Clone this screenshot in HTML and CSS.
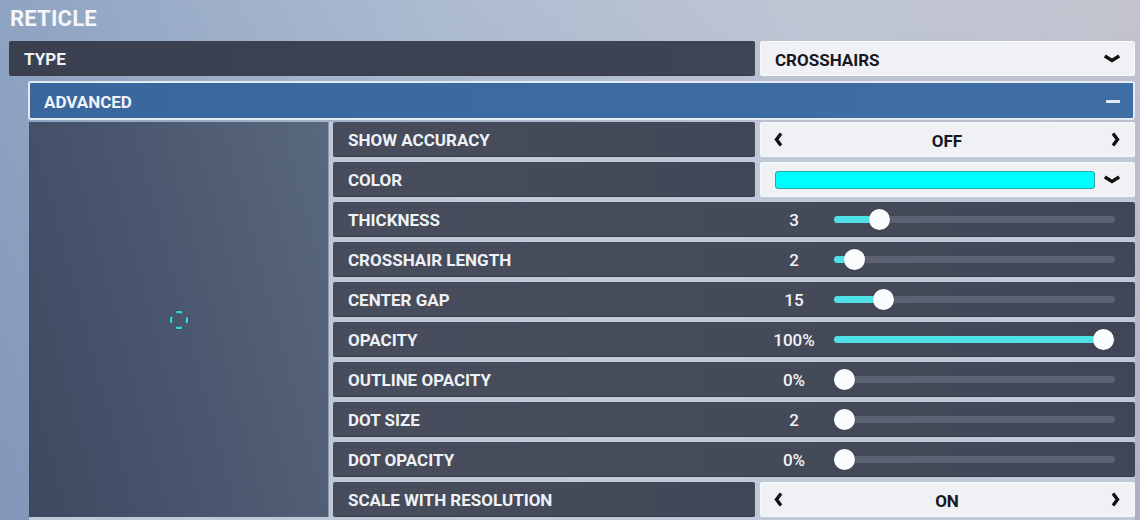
FILE: index.html
```html
<!DOCTYPE html>
<html>
<head>
<meta charset="utf-8">
<link rel="stylesheet" href="styles.css">
</head>
<body>
<div class="page">
  <h1 class="title">RETICLE</h1>
  <div class="type-row">
    <div class="cell label type-label">TYPE</div>
    <div class="light select">
      <span>CROSSHAIRS</span>
      <svg class="chev" width="18" height="9" viewBox="0 0 18 9"><polyline points="1.8,2 9,6.5 16.2,2" fill="none" stroke="#111" stroke-width="3.4" stroke-linejoin="miter"/></svg>
    </div>
  </div>
  <div class="advanced">
    <span>ADVANCED</span>
    <span class="minus"></span>
  </div>
  <div class="content">
    <div class="preview">
      <svg width="30" height="30" viewBox="0 0 30 30" class="reticle">
        <circle cx="15" cy="15" r="8" fill="none" stroke="rgba(20,40,60,0.5)" stroke-width="4" stroke-dasharray="6 6.566" stroke-dashoffset="3"/>
        <circle cx="15" cy="15" r="8" fill="none" stroke="#3fd8de" stroke-width="2.4" stroke-dasharray="6 6.566" stroke-dashoffset="3"/>
      </svg>
    </div>
    <div class="rows">
      <div class="pair-row">
        <div class="cell label">SHOW ACCURACY</div>
        <div class="light toggle">
          <svg width="9" height="15" viewBox="0 0 9 15"><polyline points="7,1.5 2.5,7.5 7,13.5" fill="none" stroke="#111" stroke-width="3.4"/></svg>
          <span>OFF</span>
          <svg width="9" height="15" viewBox="0 0 9 15"><polyline points="2,1.5 6.5,7.5 2,13.5" fill="none" stroke="#111" stroke-width="3.4"/></svg>
        </div>
      </div>
      <div class="pair-row">
        <div class="cell label">COLOR</div>
        <div class="light color-select">
          <span class="swatch"></span>
          <svg class="chev" width="18" height="9" viewBox="0 0 18 9"><polyline points="1.8,2 9,6.5 16.2,2" fill="none" stroke="#111" stroke-width="3.4"/></svg>
        </div>
      </div>
      <div class="cell slider-row">
        <span class="label">THICKNESS</span>
        <span class="value">3</span>
        <div class="track" style="--p:0.135"><div class="fill"></div><div class="thumb"></div></div>
      </div>
      <div class="cell slider-row">
        <span class="label">CROSSHAIR LENGTH</span>
        <span class="value">2</span>
        <div class="track" style="--p:0.039"><div class="fill"></div><div class="thumb"></div></div>
      </div>
      <div class="cell slider-row">
        <span class="label">CENTER GAP</span>
        <span class="value">15</span>
        <div class="track" style="--p:0.15"><div class="fill"></div><div class="thumb"></div></div>
      </div>
      <div class="cell slider-row">
        <span class="label">OPACITY</span>
        <span class="value">100%</span>
        <div class="track" style="--p:1"><div class="fill"></div><div class="thumb"></div></div>
      </div>
      <div class="cell slider-row">
        <span class="label">OUTLINE OPACITY</span>
        <span class="value">0%</span>
        <div class="track" style="--p:0"><div class="fill"></div><div class="thumb"></div></div>
      </div>
      <div class="cell slider-row">
        <span class="label">DOT SIZE</span>
        <span class="value">2</span>
        <div class="track" style="--p:0"><div class="fill"></div><div class="thumb"></div></div>
      </div>
      <div class="cell slider-row">
        <span class="label">DOT OPACITY</span>
        <span class="value">0%</span>
        <div class="track" style="--p:0"><div class="fill"></div><div class="thumb"></div></div>
      </div>
      <div class="pair-row">
        <div class="cell label">SCALE WITH RESOLUTION</div>
        <div class="light toggle">
          <svg width="9" height="15" viewBox="0 0 9 15"><polyline points="7,1.5 2.5,7.5 7,13.5" fill="none" stroke="#111" stroke-width="3.4"/></svg>
          <span>ON</span>
          <svg width="9" height="15" viewBox="0 0 9 15"><polyline points="2,1.5 6.5,7.5 2,13.5" fill="none" stroke="#111" stroke-width="3.4"/></svg>
        </div>
      </div>
    </div>
  </div>
</div>
</body>
</html>
```

FILE: styles.css
```css
* { box-sizing: border-box; }
html, body { margin: 0; padding: 0; }
body {
  width: 1140px;
  height: 520px;
  overflow: hidden;
  font-family: Roboto, "Liberation Sans", sans-serif;
  background: linear-gradient(100deg, #8aa0c0 0%, #a9b8ce 35%, #bcc3d2 65%, #c2c1cc 100%);
}
.page {
  width: 1140px;
  height: 520px;
  background: linear-gradient(180deg, rgba(255,255,255,0.04) 0%, rgba(20,50,110,0.12) 100%);
}
.title {
  margin: 0;
  height: 41px;
  padding: 7px 0 0 10px;
  font-size: 22px;
  line-height: 24px;
  font-weight: 700;
  color: #f4f6f9;
  letter-spacing: 0.2px;
}
.type-row {
  margin-left: 9px;
  width: 1126px;
  height: 35px;
  display: flex;
  gap: 5px;
}
.cell {
  background: linear-gradient(90deg, #474d5c 0%, #444a58 60%, #404656 100%);
  border-bottom: 1px solid #373c48;
  border-radius: 2px;
}
.label {
  color: #eef1f5;
  font-size: 17px;
  font-weight: 700;
  display: flex;
  align-items: center;
  padding: 2px 0 0 15px;
  flex-shrink: 0;
}
.type-label {
  width: 746px;
  background: linear-gradient(90deg, #3b4050 0%, #3e4453 100%);
}
.light {
  background: #eff1f5;
  border: 1px solid #f7f8fa;
  border-radius: 2px;
  color: #16181d;
  font-size: 17px;
  font-weight: 700;
  display: flex;
  align-items: center;
}
.light span { padding-top: 2px; }
.select {
  flex: 1;
  justify-content: space-between;
  padding: 0 13px 0 14px;
}
.advanced {
  margin: 5px 0 0 28px;
  width: 1107px;
  height: 39px;
  border: 2px solid #e4ebf4;
  border-radius: 3px;
  background: linear-gradient(90deg, #3a669e 0%, #3d6ba2 60%, #3f6ea5 100%);
  display: flex;
  align-items: center;
  justify-content: space-between;
  padding: 2px 13px 0 14px;
  color: #eef3f9;
  font-size: 17px;
  font-weight: 700;
}
.minus {
  width: 14px;
  height: 3px;
  background: #dfe8f3;
}
.content {
  margin: 2px 0 0 29px;
  width: 1106px;
  height: 398px;
  display: flex;
  gap: 4px;
  background: #c0c9d7;
}
.preview {
  width: 300px;
  height: 395px;
  background: linear-gradient(75deg, #3e4960 0%, #4a576e 50%, #5a687d 100%);
  border-right: 1px solid #8a9ab2;
  display: flex;
  align-items: center;
  justify-content: center;
}
.rows {
  width: 802px;
  display: flex;
  flex-direction: column;
  gap: 5px;
}
.pair-row {
  height: 35px;
  display: flex;
  gap: 5px;
}
.pair-row .label { width: 422px; }
.toggle {
  flex: 1;
  justify-content: space-between;
  padding: 0 14px 0 13px;
}
.color-select {
  flex: 1;
  padding: 0 13px 0 14px;
  gap: 8px;
}
.color-select .swatch { padding: 0; }
.swatch {
  flex: 1;
  height: 18px;
  background: #00fdfd;
  border: 1px solid #2aa7a8;
  border-radius: 3px;
}
.slider-row {
  height: 35px;
  display: grid;
  grid-template-columns: 421px 68px 281px;
  column-gap: 6px;
  align-items: center;
}
.slider-row .label { height: 100%; }
.value {
  text-align: center;
  color: #f1f3f6;
  font-size: 17px;
  font-weight: 500;
  padding-top: 2px;
}
.track {
  position: relative;
  height: 7px;
  border-radius: 4px;
  background: #5c6271;
}
.fill {
  height: 100%;
  width: calc(11px + var(--p) * (100% - 22px));
  border-radius: 4px;
  background: #4ee2e7;
}
.thumb {
  position: absolute;
  top: -7px;
  left: calc(var(--p) * (100% - 22px));
  width: 21px;
  height: 21px;
  border-radius: 50%;
  background: #fbfcfd;
  box-shadow: 0 0 2px rgba(0,0,0,0.25);
}
```
